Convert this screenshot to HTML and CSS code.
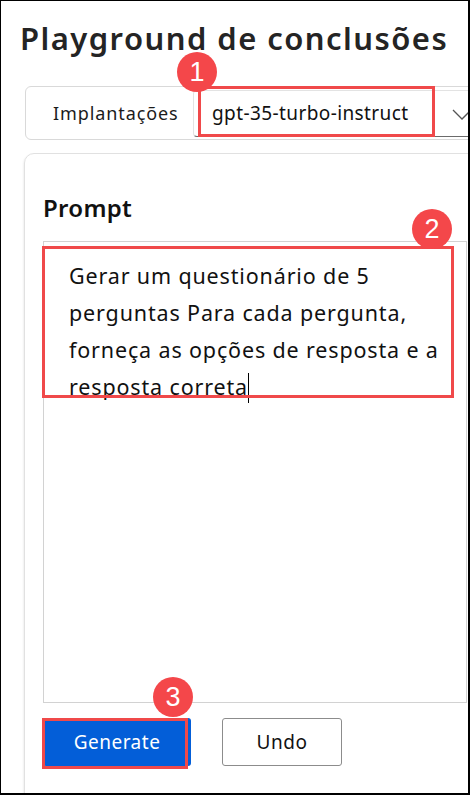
FILE: index.html
```html
<!DOCTYPE html>
<html lang="pt">
<head>
<meta charset="utf-8">
<link rel="stylesheet" href="styles.css">
</head>
<body>
<div class="frame">
  <h1 class="title">Playground de conclusões</h1>
  <div class="deploy">
    <span class="deploy-label">Implantações</span>
    <div class="select">
      <span class="select-value">gpt-35-turbo-instruct</span>
      <svg class="chevron" width="20" height="12" viewBox="0 0 20 12"><path d="M1 1 L10 10 L19 1" fill="none" stroke="#555" stroke-width="1.3"/></svg>
    </div>
  </div>
  <div class="card">
    <h2 class="prompt-label">Prompt</h2>
    <div class="textarea">
      <p class="prompt-text">Gerar um questionário de 5 perguntas Para cada pergunta, forneça as opções de resposta e a resposta correta<span class="caret"></span></p>
    </div>
    <div class="actions">
      <button class="btn btn-primary">Generate</button>
      <button class="btn btn-secondary">Undo</button>
    </div>
  </div>

  <div class="mark mark-1"></div>
  <div class="mark mark-2"></div>
  <div class="mark mark-3"></div>
  <div class="badge badge-1">1</div>
  <div class="badge badge-2">2</div>
  <div class="badge badge-3">3</div>
</div>
</body>
</html>
```

FILE: styles.css
```css
* { box-sizing: border-box; }
html, body { margin: 0; padding: 0; background: #fff; }
body { font-family: "Noto Sans", "Open Sans", sans-serif; color: #1b1b1b; }

.frame {
  position: relative;
  width: 470px;
  height: 795px;
  border-top: 1px solid #000;
  border-left: 1px solid #000;
  border-right: 2px solid #000;
  border-bottom: 2px solid #000;
  overflow: hidden;
  background: #fff;
}

.title {
  margin: 16px 0 0 19px;
  font-size: 31px;
  font-weight: 600;
  line-height: 42px;
  color: #242424;
  white-space: nowrap;
  letter-spacing: 1.45px;
}

.deploy {
  display: flex;
  align-items: center;
  margin: 27px 0 0 24px;
  width: 470px;
  height: 54px;
  border: 1px solid #d9d9d9;
  border-radius: 6px;
  padding: 3px 0 3px 0;
}
.deploy-label {
  width: 167px;
  padding-left: 27px;
  font-size: 18px;
  letter-spacing: 0.9px;
  color: #1b1b1b;
}
.select {
  display: flex;
  align-items: center;
  height: 47px;
  flex: 1;
  border: 1px solid #e3e3e3;
  border-bottom: 1px solid #6b6b6b;
  border-radius: 4px 0 0 4px;
  padding-left: 18px;
  position: relative;
}
.select-value {
  font-size: 19px;
  color: #111;
  letter-spacing: 0.4px;
}
.chevron { position: absolute; left: 258px; top: 18px; }

.card {
  margin: 13px 0 0 23px;
  width: 470px;
  height: 660px;
  border: 1px solid #e1e1e1;
  border-radius: 10px;
  box-shadow: -1px 1px 2px rgba(0,0,0,0.06);
  padding: 38px 0 0 18px;
}
.prompt-label {
  margin: 0;
  font-size: 24px;
  font-weight: 600;
  line-height: 32px;
  color: #111;
  letter-spacing: 0.3px;
}
.textarea {
  margin-top: 17px;
  width: 424px;
  height: 462px;
  border: 1px solid #d2d2d2;
  padding: 15px 20px 0 25px;
}
.prompt-text {
  margin: 0;
  font-size: 21.5px;
  line-height: 37px;
  color: #111;
  letter-spacing: 0.85px;
}
.caret {
  display: inline-block;
  width: 1px;
  height: 30px;
  background: #000;
  vertical-align: -8px;
}

.actions {
  display: flex;
  gap: 31px;
  margin-top: 15px;
}
.btn {
  font-family: "Noto Sans", "Open Sans", sans-serif;
  font-size: 19px;
  height: 48px;
  border-radius: 3px;
  cursor: pointer;
}
.btn-primary {
  width: 148px;
  background: #035ed8;
  color: #fff;
  border: none;
  letter-spacing: 0.5px;
}
.btn-secondary {
  width: 120px;
  background: #fff;
  color: #111;
  border: 1px solid #8c8c8c;
  letter-spacing: 0.5px;
}

.mark {
  position: absolute;
  border: 3px solid #f0494a;
}
.mark-1 { left: 197px; top: 85px; width: 237px; height: 51px; }
.mark-2 { left: 41px; top: 245px; width: 412px; height: 152px; }
.mark-3 { left: 41px; top: 717px; width: 146px; height: 51px; }

.badge {
  position: absolute;
  width: 40px;
  height: 40px;
  border-radius: 50%;
  background: #f4474a;
  color: #fff;
  font-family: "Liberation Sans", Arial, sans-serif;
  font-size: 27px;
  line-height: 40px;
  text-align: center;
}
.badge-1 { left: 176px; top: 51px; }
.badge-2 { left: 411px; top: 208px; }
.badge-3 { left: 152px; top: 676px; }
```
